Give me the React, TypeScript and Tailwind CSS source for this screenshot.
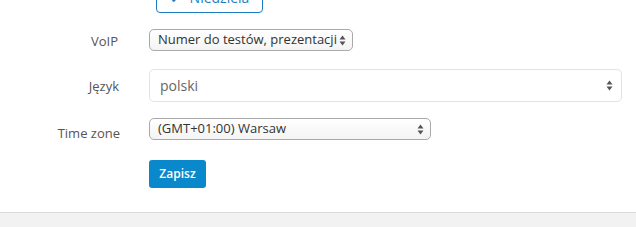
import React from 'react';

const Arrows = () => (
  <svg width="7" height="11" viewBox="0 0 7 11" className="shrink-0">
    <path d="M3.5 0.5 L6.5 4.5 L0.5 4.5 Z" fill="#555" />
    <path d="M3.5 10.5 L6.5 6.5 L0.5 6.5 Z" fill="#555" />
  </svg>
);

const SmallSelect = ({ value, width }: { value: string; width: string }) => (
  <div
    className={`${width} h-[22px] flex items-center justify-between pl-[8px] pr-[6px] rounded-[5px] border border-[#a9a9a9] bg-gradient-to-b from-white to-[#f4f4f4] text-[13px] text-[#333]`}
  >
    <span className="truncate">{value}</span>
    <Arrows />
  </div>
);

const App = () => {
  return (
    <div className="w-[636px] h-[227px] overflow-hidden bg-white text-[#555] font-['Open_Sans',_'Liberation_Sans',_sans-serif] flex flex-col">
      <div className="flex-1">
        <div className="flex pl-[156px] mt-[-18px]">
          <div className="w-[107px] h-[31px] rounded-[4px] border border-[#1b7ec2] text-[#1b7ec2] text-[14px] flex items-center justify-center gap-2">
            <span>✔</span>
            <span>Niedziela</span>
          </div>
        </div>

        <div className="flex items-start mt-[16px]">
          <div className="w-[120px] pr-[2px] text-right text-[13px] leading-[18px] pt-[3px]">VoIP</div>
          <div className="ml-[29px]">
            <SmallSelect value="Numer do testów, prezentacji" width="w-[204px]" />
          </div>
        </div>

        <div className="flex items-start mt-[18px]">
          <div className="w-[120px] pr-[1px] text-right text-[13px] leading-[18px] pt-[8px]">Język</div>
          <div className="ml-[29px] w-[473px] h-[33px] rounded-[5px] border border-[#e3e3e3] bg-white flex items-center justify-between pl-[10px] pr-[8px]">
            <span className="text-[14px] text-[#666]">polski</span>
            <Arrows />
          </div>
        </div>

        <div className="flex items-start mt-[16px]">
          <div className="w-[120px] text-right text-[13px] leading-[18px] pt-[6px]">Time zone</div>
          <div className="ml-[29px]">
            <SmallSelect value="(GMT+01:00) Warsaw" width="w-[282px]" />
          </div>
        </div>

        <div className="flex mt-[18px] pl-[149px]">
          <button className="w-[57px] h-[28px] rounded-[3px] bg-[#0a88cc] text-white text-[12px] font-semibold">
            Zapisz
          </button>
        </div>
      </div>
      <div className="h-[15px] border-t border-[#dcdcdc] bg-[#f2f2f2]" />
    </div>
  );
};

export default App;
